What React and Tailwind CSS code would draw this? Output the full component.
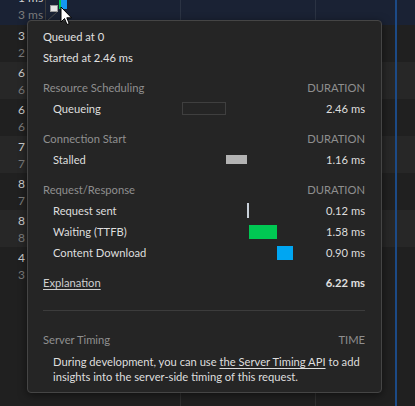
import React from "react";

const timeRows = [
  ["1 ms", "3 ms"],
  ["3 ms", "2 ms"],
  ["6 ms", "6 ms"],
  ["6 ms", "6 ms"],
  ["7 ms", "7 ms"],
  ["8 ms", "7 ms"],
  ["8 ms", "8 ms"],
  ["4 ms", "3 ms"],
];

function Header({ left, right, className = "" }) {
  return (
    <div className={"flex h-[21px] items-center justify-between text-[#8f8f8f] " + className}>
      <span>{left}</span>
      <span>{right}</span>
    </div>
  );
}

function Row({ label, value, bar }) {
  return (
    <div className="grid h-[21px] grid-cols-[137px_1fr_auto] items-center">
      <span className="pl-[10px] text-[#dedede]">{label}</span>
      <div className="flex h-full items-center">{bar}</div>
      <span className="text-[#dedede]">{value}</span>
    </div>
  );
}

export default function App() {
  return (
    <div className="relative h-[406px] w-[415px] overflow-hidden bg-[#202020] font-['Segoe_UI',Lato,sans-serif] text-[11.2px]">
      {/* background table */}
      <div className="mt-[-13px] flex flex-col">
        {timeRows.map((r, i) => {
          const bg =
            i === 0 ? "bg-[#1a2234]" : i % 2 === 0 ? "bg-[#272727]" : "bg-[#202020]";
          return (
            <div key={i} className={"flex h-[37px] " + bg + (i === 0 ? " h-[38px]" : "")}>
              <div className="flex w-[46px] flex-col justify-center border-r border-[#3a3a3a] pl-[18px] text-[12px] leading-[17px]">
                <span className="text-[#d0d0d0]">{r[0]}</span>
                <span className="text-[#7d7d7d]">{r[1]}</span>
              </div>
              <div className="relative flex-1">
                {i === 0 && (
                  <div className="flex h-full items-center pl-[4px] pt-[4px]">
                    <div className="mt-[1px] h-[7px] w-[8px] border border-[#9a9a9a] bg-[#e6e6e6]" />
                    <div className="ml-[1px] mt-[-12px] h-[14px] w-[2px] bg-[#00c853]" />
                    <div className="mt-[-12px] h-[14px] w-[6px] bg-[#1497f0]" />
                  </div>
                )}
              </div>
            </div>
          );
        })}
      </div>

      {/* grid lines of the waterfall */}
      <div className="absolute left-[180px] top-0 h-full w-px bg-[#ffffff14]" />
      <div className="absolute left-[315px] top-0 h-full w-px bg-[#ffffff14]" />
      <div className="absolute left-[395px] top-0 h-full w-[2px] bg-[#1c4a86]" />

      {/* tooltip notch */}
      <svg className="absolute left-[46px] top-[10px]" width="16" height="12" viewBox="0 0 16 12">
        <path d="M1 11 L11 2" stroke="#4a4a4a" strokeWidth="1" fill="none" />
      </svg>

      {/* tooltip */}
      <div className="absolute left-[27px] top-[20px] w-[355px] rounded-[4px] border border-[#454545] bg-[#252525] pb-[8px] pl-[15px] pr-[16px] pt-[6px] shadow-[0_2px_8px_rgba(0,0,0,0.5)]">
        <div className="flex h-[21px] items-center text-[#e0e0e0]">Queued at 0</div>
        <div className="flex h-[21px] items-center text-[#e0e0e0]">Started at 2.46 ms</div>

        <Header className="mt-[9px]" left="Resource Scheduling" right="DURATION" />
        <Row
          label="Queueing"
          value="2.46 ms"
          bar={<div className="mb-[3px] ml-[2px] h-[13px] w-[44px] border border-[#3f3f3f]" />}
        />

        <Header className="mt-[9px]" left="Connection Start" right="DURATION" />
        <Row
          label="Stalled"
          value="1.16 ms"
          bar={<div className="mb-[3px] ml-[46px] h-[9px] w-[21px] bg-[#b3b3b3]" />}
        />

        <Header className="mt-[9px]" left="Request/Response" right="DURATION" />
        <Row
          label="Request sent"
          value="0.12 ms"
          bar={<div className="mb-[2px] ml-[67px] h-[15px] w-[2px] bg-[#c8d0d9]" />}
        />
        <Row
          label="Waiting (TTFB)"
          value="1.58 ms"
          bar={<div className="mb-[2px] ml-[69px] h-[14px] w-[28px] bg-[#00c853]" />}
        />
        <Row
          label="Content Download"
          value="0.90 ms"
          bar={<div className="mb-[2px] ml-[97px] h-[14px] w-[16px] bg-[#00a6f2]" />}
        />

        <div className="mt-[9px] flex h-[21px] items-center justify-between">
          <span className="text-[#cfcfcf] underline underline-offset-2">Explanation</span>
          <span className="font-bold text-[#e0e0e0]">6.22 ms</span>
        </div>

        <div className="mt-[16px] h-px bg-[#3c3c3c]" />

        <Header className="mt-[19px]" left="Server Timing" right="TIME" />
        <p className="mt-[3px] pl-[10px] leading-[15px] text-[#dedede]">
          During development, you can use{" "}
          <span className="underline underline-offset-2">the Server Timing API</span> to add
          insights into the server-side timing of this request.
        </p>
      </div>

      {/* mouse cursor */}
      <svg className="absolute left-[60px] top-[6px]" width="13" height="21" viewBox="0 0 13 21">
        <path
          d="M1 1 L1 16 L4.5 12.5 L7 18.5 L9.2 17.6 L6.8 11.8 L11.5 11.8 Z"
          fill="#ffffff"
          stroke="#000000"
          strokeWidth="1"
          strokeLinejoin="round"
        />
      </svg>
    </div>
  );
}
